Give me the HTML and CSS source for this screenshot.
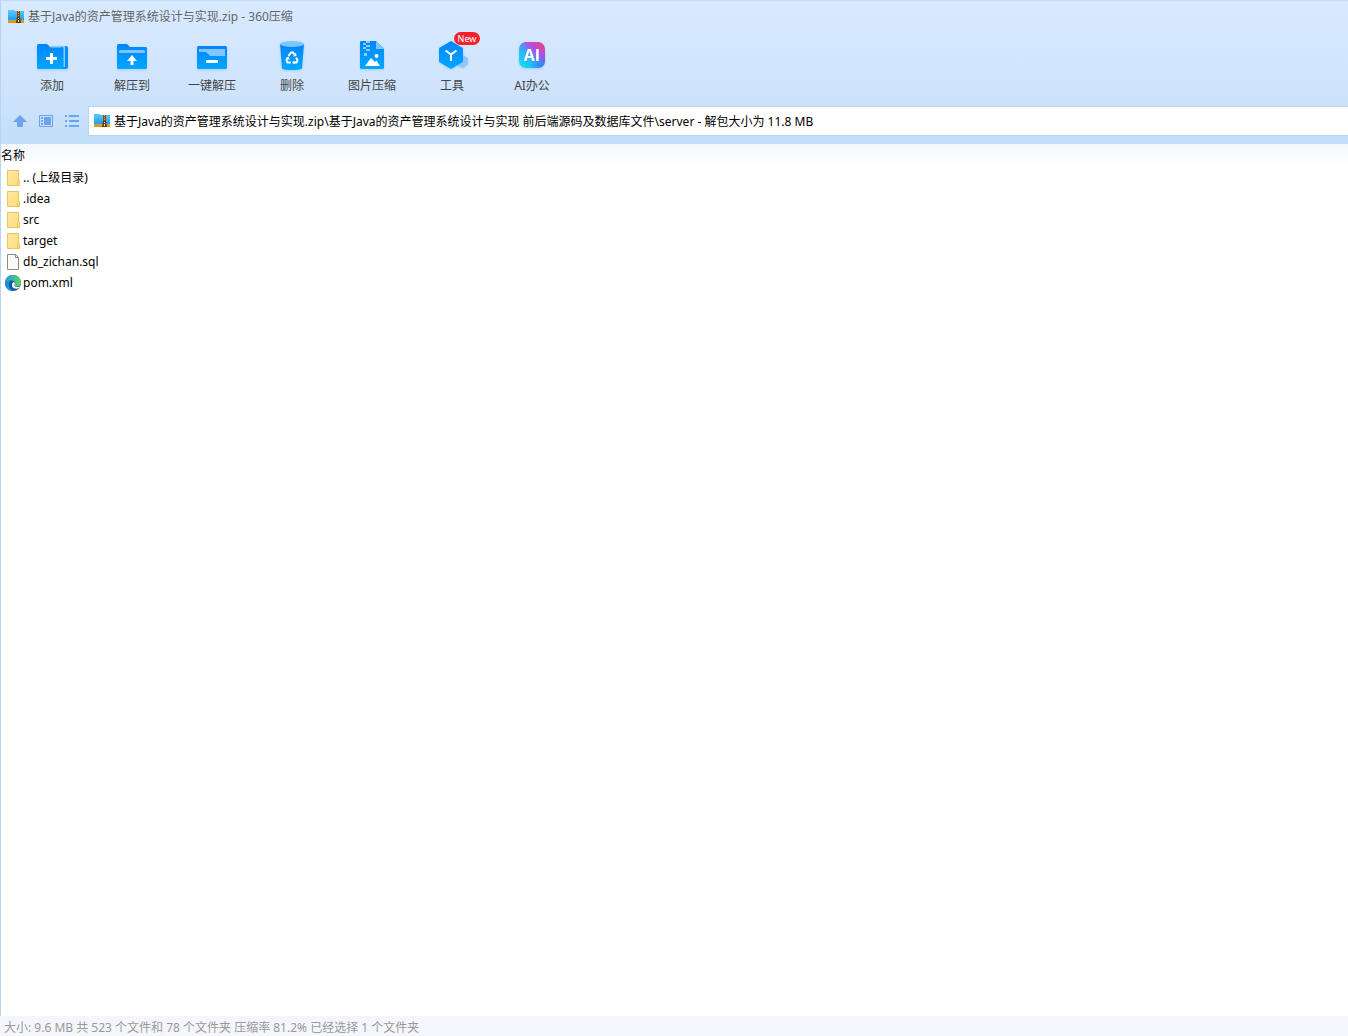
FILE: index.html
```html
<!DOCTYPE html>
<html lang="zh-CN">
<head>
    <meta charset="UTF-8">
    <meta name="viewport" content="width=device-width, initial-scale=1.0">
    <title>基于Java的资产管理系统设计与实现.zip - 360压缩</title>
    <link rel="stylesheet" href="styles.css">
</head>
<body>
    <svg class="defs" aria-hidden="true">
        <defs>
            <linearGradient id="blue" x1="0" y1="0" x2="0" y2="1">
                <stop offset="0" stop-color="#0084ff"/>
                <stop offset="1" stop-color="#00a8ff"/>
            </linearGradient>
            <linearGradient id="folder" x1="0" y1="0" x2="1" y2="1">
                <stop offset="0" stop-color="#ffe8a0"/>
                <stop offset="1" stop-color="#ffdc7c"/>
            </linearGradient>
            <linearGradient id="zip" x1="0" y1="0" x2="0" y2="1">
                <stop offset="0" stop-color="#5ccbff"/>
                <stop offset="1" stop-color="#1c9be8"/>
            </linearGradient>
            <linearGradient id="ai" x1="0" y1="1" x2="1" y2="0">
                <stop offset="0.1" stop-color="#12dcf0"/>
                <stop offset="0.4" stop-color="#2ab4f6"/>
                <stop offset="0.65" stop-color="#b04fe8"/>
                <stop offset="1" stop-color="#f5426c"/>
            </linearGradient>
            <radialGradient id="aiCorner" cx="1" cy="1" r="0.6">
                <stop offset="0" stop-color="#2c7dff"/>
                <stop offset="1" stop-color="#2c7dff" stop-opacity="0"/>
            </radialGradient>
            <linearGradient id="edge" x1="0" y1="0" x2="1" y2="0">
                <stop offset="0" stop-color="#1f9ce0"/>
                <stop offset="1" stop-color="#62d64e"/>
            </linearGradient>
        </defs>
        <symbol id="icon-zip" viewBox="0 0 16 16">
            <path fill="url(#zip)" d="M0 1h6l1 1h9v10H0z"/>
            <path fill="#8cc63f" d="M0 11h16v1H0z"/>
            <path fill="#f58a1f" d="M0 12h16v2H0z"/>
            <path fill="#8a4b14" d="M9 2h3v7H9z"/>
            <path fill="#f0a04a" d="M10 2h1v1h-1zM10 4h1v1h-1zM10 6h1v1h-1z"/>
            <path fill="#6b3510" d="M9 8h3l1 6h-5z"/>
            <path fill="#ffe38a" d="M10 9h1v1h-1zM10 11h1v2h-1z"/>
        </symbol>
        <symbol id="icon-folder" viewBox="0 0 16 18">
            <path fill="url(#folder)" stroke="#e9c65c" d="M2.500 1.500h11v10h1v5h-12z"/>
            <path fill="none" stroke="#e9c65c" d="M12.500 16.500v-4l1-1"/>
        </symbol>
    </svg>

    <div class="window">
        <header class="chrome">
            <div class="titlebar">
                <svg class="icon-small"><use href="#icon-zip"/></svg>
                <h1>基于Java的资产管理系统设计与实现.zip - 360压缩</h1>
            </div>

            <div class="toolbar">
                <button type="button" class="tool">
                    <svg viewBox="0 0 32 32">
                        <path fill="#0090ff" d="M25 6h5a2 2 0 0 1 2 2v19a2 2 0 0 1-2 2h-5z"/>
                        <path fill="#8cccff" d="M14 6h15v21h-1.500V7.500H14z"/>
                        <path fill="url(#blue)" d="M1 5.500A1.500 1.500 0 0 1 2.500 4H11l3.500 3.500H27V29H2.500A1.500 1.500 0 0 1 1 27.500z"/>
                        <path fill="#fff" d="M14 13h3v4h4v3h-4v4h-3v-4h-4v-3h4z"/>
                    </svg>
                    <span>添加</span>
                </button>
                <button type="button" class="tool">
                    <svg viewBox="0 0 32 32">
                        <path fill="url(#blue)" d="M1 5.500A1.500 1.500 0 0 1 2.500 4H11l3 3h15.500A1.500 1.500 0 0 1 31 8.500v19a1.500 1.500 0 0 1-1.500 1.500h-27A1.500 1.500 0 0 1 1 27.500z"/>
                        <path fill="#7fc6ff" d="M3 13v-1.500A1.500 1.500 0 0 1 4.500 10h23a1.500 1.500 0 0 1 1.500 1.500V13z"/>
                        <path fill="#fff" d="M16 15l5 6h-3.500v4h-3v-4H11z"/>
                    </svg>
                    <span>解压到</span>
                </button>
                <button type="button" class="tool">
                    <svg viewBox="0 0 32 32">
                        <rect x="1" y="6" width="30" height="23" rx="1.500" fill="url(#blue)"/>
                        <path fill="#7fc6ff" d="M3 9h26v7H14l-4-4H3z"/>
                        <rect x="10" y="20" width="12" height="3" rx="1" fill="#fff"/>
                    </svg>
                    <span>一键解压</span>
                </button>
                <button type="button" class="tool">
                    <svg viewBox="0 0 32 32">
                        <path fill="url(#blue)" d="M4 4h24l-2 24c0 1.500-4 2-10 2s-10-.5-10-2z"/>
                        <ellipse cx="16" cy="4" rx="12" ry="3" fill="#7fc6ff"/>
                        <g fill="none" stroke="#fff" stroke-width="2">
                            <path d="M12.500 16l2.500-3.500h2l1.500 2"/>
                            <path d="M20 17.500l1.500 2.500-1 2.500H18"/>
                            <path d="M15 22.500h-3.500l-1-2.500 1-2"/>
                        </g>
                        <path fill="#fff" d="M17 16.500l3.500-.5-.5-3.500zM18.500 20.500v4l-2.500-2zM9.500 18l3.500-1.500.5 3.500z"/>
                    </svg>
                    <span>删除</span>
                </button>
                <button type="button" class="tool">
                    <svg viewBox="0 0 32 32">
                        <path fill="url(#blue)" d="M4 2.500A1.500 1.500 0 0 1 5.500 1H20l8 8v18.500a1.500 1.500 0 0 1-1.500 1.500h-21A1.500 1.500 0 0 1 4 27.500z"/>
                        <path fill="#7fc6ff" d="M20 1l8 8h-8z"/>
                        <path fill="#8cccff" d="M7 3h3v2H7zM10 5h4v2h-4zM7 7h3v2H7zM10 9h4v2h-4zM8 13h3v3H8zM10 1h4v2h-4z"/>
                        <circle cx="20.500" cy="16" r="2" fill="#fff"/>
                        <path fill="#fff" d="M9 26l6-8 4 4 1.500-1.500L24 26z"/>
                    </svg>
                    <span>图片压缩</span>
                </button>
                <button type="button" class="tool">
                    <svg viewBox="0 0 32 32">
                        <path fill="#8cc8fb" d="M27 15l5 3v6l-5 4-6-3v-6z"/>
                        <path fill="url(#blue)" d="M15 1l11 6.500a2 2 0 0 1 1 1.500v12a2 2 0 0 1-1 1.500L16 28.500a2 2 0 0 1-2 0L4 22.500A2 2 0 0 1 3 21V9a2 2 0 0 1 1-1.500z"/>
                        <path fill="none" stroke="#fff" stroke-width="2" d="M9.500 10.500L15 14.500l5.500-4M15 14v7"/>
                    </svg>
                    <span>工具</span>
                    <em class="badge">New</em>
                </button>
                <button type="button" class="tool">
                    <svg viewBox="0 0 32 32">
                        <rect x="3" y="2" width="26" height="26" rx="7" fill="url(#ai)"/>
                        <rect x="3" y="2" width="26" height="26" rx="7" fill="url(#aiCorner)"/>
                        <text x="16" y="21" class="ai-text">AI</text>
                    </svg>
                    <span>AI办公</span>
                </button>
            </div>

            <div class="address-row">
                <nav class="nav-buttons">
                    <button type="button" aria-label="向上">
                        <svg viewBox="0 0 16 16"><path fill="#6ba3ee" d="M8 2l7 7h-4v5H5V9H1z"/></svg>
                    </button>
                    <button type="button" aria-label="预览">
                        <svg viewBox="0 0 16 16">
                            <path fill="none" stroke="#6ba3ee" d="M1.500 2.500h13v11h-13z"/>
                            <path fill="#6ba3ee" d="M6 4h7v8H6zM3 4h2v2H3zM3 7h2v2H3zM3 10h2v2H3z"/>
                        </svg>
                    </button>
                    <button type="button" aria-label="列表">
                        <svg viewBox="0 0 16 16"><path fill="#6ba3ee" d="M1 2h2v2H1zM5 2h10v2H5zM1 7h2v2H1zM5 7h10v2H5zM1 12h2v2H1zM5 12h10v2H5z"/></svg>
                    </button>
                </nav>
                <label class="address">
                    <svg class="icon-small"><use href="#icon-zip"/></svg>
                    <input type="text" aria-label="路径" value="基于Java的资产管理系统设计与实现.zip\基于Java的资产管理系统设计与实现 前后端源码及数据库文件\server - 解包大小为 11.8 MB">
                </label>
            </div>
        </header>

        <main class="content">
            <table class="files">
                <thead>
                    <tr><th>名称</th></tr>
                </thead>
                <tbody>
                    <tr><td><div class="file"><svg><use href="#icon-folder"/></svg><span>.. (上级目录)</span></div></td></tr>
                    <tr><td><div class="file"><svg><use href="#icon-folder"/></svg><span>.idea</span></div></td></tr>
                    <tr><td><div class="file"><svg><use href="#icon-folder"/></svg><span>src</span></div></td></tr>
                    <tr><td><div class="file"><svg><use href="#icon-folder"/></svg><span>target</span></div></td></tr>
                    <tr><td><div class="file">
                        <svg viewBox="0 0 16 18"><path fill="#fafafa" stroke="#8c8c8c" d="M2.500 1.500h8l3 3v12h-11zM10.500 1.500v3h3"/></svg>
                        <span>db_zichan.sql</span>
                    </div></td></tr>
                    <tr><td><div class="file">
                        <svg viewBox="0 0 16 18">
                            <circle cx="8" cy="9" r="8" fill="#0c59a4"/>
                            <path fill="url(#edge)" d="M0 9a8 8 0 0 1 16 0c0 2.500-2 3.500-4 3.500-2 0-3-.8-2.500-1.500C11 8.500 9 6.500 6 6.500 3 6.500 1 7.500 0 9z"/>
                            <path fill="#1b8fd8" d="M0 9c1-2 3.500-2.500 5.500-2C3 9 3.500 14 8 17 3.500 17 0 13.500 0 9z"/>
                            <path fill="#fff" d="M8.500 8c1.500.5 1.500 2 1 3-.5 1 1 2 3 2 1.500 0 2.500-.5 3-1-1 2-3 3-5.500 2.500C6.500 14 6 9.500 8.500 8z"/>
                        </svg>
                        <span>pom.xml</span>
                    </div></td></tr>
                </tbody>
            </table>
        </main>
    </div>

    <footer class="statusbar">大小: 9.6 MB 共 523 个文件和 78 个文件夹 压缩率 81.2% 已经选择 1 个文件夹</footer>
</body>
</html>
```
FILE: styles.css
```css
:root {
    --line: #b8d4f5;
    --text-color: #000;
}

* {
    box-sizing: border-box;
    margin: 0;
    padding: 0;
}

body {
    display: flex;
    flex-direction: column;
    min-height: 100vh;
    font-family: "Noto Sans", "Noto Sans CJK SC", sans-serif;
    font-size: 12px;
    line-height: 16px;
    background: #fff;
    color: var(--text-color);
}

button,
input {
    font: inherit;
    color: inherit;
    border: none;
    background: none;
}

svg {
    display: block;
    flex: none;
}

.defs {
    position: absolute;
    width: 0;
    height: 0;
}

.window {
    flex: 1;
    display: flex;
    flex-direction: column;
    border-left: 1px solid var(--line);
}

.chrome {
    background: linear-gradient(#d7eaff, #cfe4fc 60%, #c4dff9 94%);
    border-top: 1px solid #bfdbf7;
    padding-bottom: 8px;
}

.titlebar {
    display: flex;
    align-items: center;
    gap: 4px;
    height: 31px;
    padding-left: 7px;
}

.titlebar h1 {
    font-size: 12px;
    font-weight: normal;
    color: #666;
}

.icon-small {
    width: 16px;
    height: 16px;
}

.toolbar {
    display: flex;
    height: 74px;
    padding: 8px 0 0 11px;
}

.tool {
    position: relative;
    display: flex;
    flex-direction: column;
    align-items: center;
    gap: 6px;
    width: 80px;
    color: #444;
    cursor: pointer;
}

.tool svg {
    width: 32px;
    height: 32px;
    overflow: visible;
    filter: drop-shadow(0 1px 1px rgba(0, 120, 255, 0.2));
}

.ai-text {
    font: bold 16px "Open Sans", sans-serif;
    fill: #fff;
    text-anchor: middle;
}

/* sits over the corner of the tool icon */
.badge {
    position: absolute;
    top: -8px;
    left: 42px;
    width: 26px;
    border-radius: 7px;
    font-size: 9px;
    font-style: normal;
    line-height: 13px;
    text-align: center;
    background: #f5222d;
    color: #fff;
}

.address-row {
    display: flex;
    align-items: stretch;
    height: 30px;
}

.nav-buttons {
    display: flex;
    align-items: center;
    gap: 10px;
    width: 87px;
    padding-left: 11px;
}

.nav-buttons svg {
    width: 16px;
    height: 16px;
}

.address {
    flex: 1;
    display: flex;
    align-items: center;
    gap: 4px;
    padding-left: 5px;
    border: 1px solid var(--line);
    border-right: none;
    background: #fff;
}

.address input {
    flex: 1;
    min-width: 0;
    padding-top: 2px;
    outline: none;
}

.content {
    flex: 1;
}

.files {
    width: 100%;
    border-collapse: collapse;
}

.files th {
    height: 23px;
    padding-top: 1px;
    font-weight: normal;
    text-align: left;
    background: linear-gradient(#f3f8ff, #fff);
}

.files td {
    height: 21px;
}

.file {
    display: flex;
    align-items: center;
    gap: 2px;
    padding-left: 4px;
}

.file svg {
    width: 16px;
    height: 18px;
}

.file span {
    padding-top: 1px;
}

.statusbar {
    height: 20px;
    padding: 4px 4px 0;
    background: #f4f6fb;
    color: #999;
}
```
